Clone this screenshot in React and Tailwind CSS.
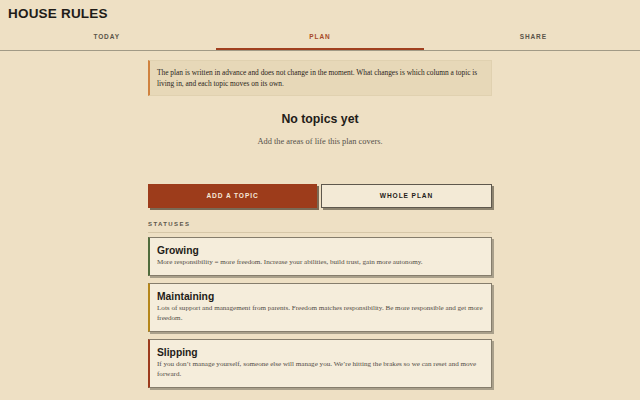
import React, { useState } from 'react';

const tabs = ['TODAY', 'PLAN', 'SHARE'];

const statuses = [
  {
    name: 'Growing',
    text: 'More responsibility = more freedom. Increase your abilities, build trust, gain more autonomy.',
    border: 'border-l-[#4f6b3c]',
  },
  {
    name: 'Maintaining',
    text: 'Lots of support and management from parents. Freedom matches responsibility. Be more responsible and get more freedom.',
    border: 'border-l-[#b5861a]',
  },
  {
    name: 'Slipping',
    text: 'If you don\u2019t manage yourself, someone else will manage you. We\u2019re hitting the brakes so we can reset and move forward.',
    border: 'border-l-[#9c3b1d]',
  },
];

const sans = { fontFamily: '"Liberation Sans", Arial, sans-serif' };
const serif = { fontFamily: '"Liberation Serif", "Times New Roman", serif' };

const App = () => {
  const [active, setActive] = useState('PLAN');

  return (
    <div className="min-h-screen bg-[#eee0c4] text-[#1f1c18]" style={sans}>
      <h1 className="px-2 pt-[5px] text-[13.5px] font-bold leading-[17px] tracking-[0.2px]">HOUSE RULES</h1>

      {/* Tabs */}
      <div className="mt-[10px] flex border-b border-[#a19a86]">
        {tabs.map(t => (
          <button
            key={t}
            onClick={() => setActive(t)}
            className="flex flex-1 flex-col items-center px-[3px]"
          >
            <span
              className={`text-[6.5px] font-bold leading-[10px] tracking-[0.9px] ${
                active === t ? 'text-[#a64a28]' : 'text-[#5a5449]'
              }`}
            >
              {t}
            </span>
            <span
              className={`mt-[6px] h-[2px] w-full ${active === t ? 'bg-[#a0401f]' : 'bg-transparent'}`}
            />
          </button>
        ))}
      </div>

      <div className="mx-auto w-[344px] pt-[9px]">
        {/* Note */}
        <div
          className="border border-[#e0d1b0] border-l-2 border-l-[#d0823f] bg-[#e7d8b8] px-[7px] py-[6px] text-[7.4px] leading-[11px] text-[#2a2520]"
          style={serif}
        >
          The plan is written in advance and does not change in the moment. What changes is which column a topic is
          living in, and each topic moves on its own.
        </div>

        {/* Empty state */}
        <div className="pt-[16px] text-center">
          <h2 className="text-[12.3px] font-bold leading-[15px]">No topics yet</h2>
          <p className="mt-[9px] text-[8.4px] leading-[11px] text-[#55504a]" style={serif}>
            Add the areas of life this plan covers.
          </p>
        </div>

        {/* Buttons */}
        <div className="mt-[37px] flex gap-[4px]">
          <button className="h-[24px] flex-1 bg-[#9d3c1b] text-[6.6px] font-bold tracking-[0.9px] text-[#f6e8d8] shadow-[2px_2px_0_#7a6a55]">
            ADD A TOPIC
          </button>
          <button className="h-[24px] flex-1 border border-[#5e584d] bg-[#f3ead6] text-[6.6px] font-bold tracking-[0.9px] text-[#1f1c18] shadow-[2px_2px_0_#8d8470]">
            WHOLE PLAN
          </button>
        </div>

        {/* Statuses */}
        <div className="mt-[12px] border-b border-[#d6c7a8] pb-[4px] text-[6px] font-bold leading-[8px] tracking-[1.4px] text-[#5a5449]">
          STATUSES
        </div>

        <div className="mt-[4px] flex flex-col gap-[7px]">
          {statuses.map(s => (
            <div
              key={s.name}
              className={`border border-[#857d6c] border-l-2 ${s.border} bg-[#f5eddb] px-[7px] pb-[7px] pt-[6px] shadow-[2px_2px_0_#a9a08b]`}
            >
              <div className="text-[10.3px] font-bold leading-[13px]">{s.name}</div>
              <div className="text-[7.1px] leading-[10.5px] text-[#524c45]" style={serif}>
                {s.text}
              </div>
            </div>
          ))}
        </div>
      </div>
    </div>
  );
};

export default App;
